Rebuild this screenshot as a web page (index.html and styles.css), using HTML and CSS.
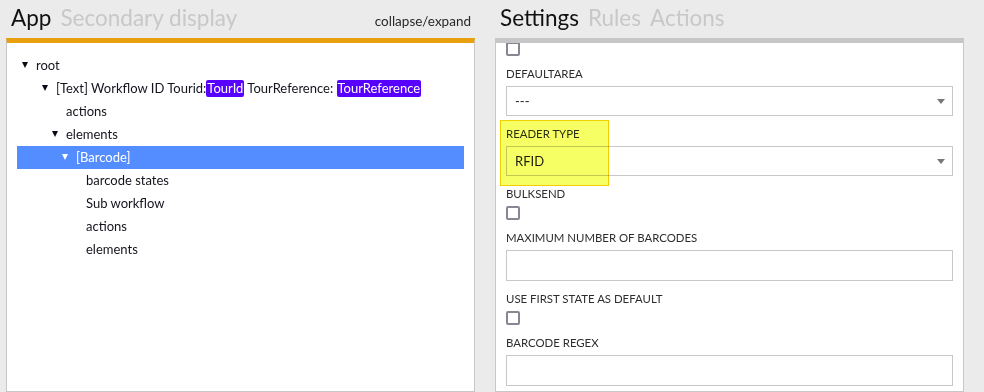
FILE: index.html
```html
<!DOCTYPE html>
<html lang="en">

<head>
    <meta charset="UTF-8">
    <title>Workflow editor</title>
    <link rel="stylesheet" href="styles.css">
</head>

<body>
    <div class="app">

        <!-- tree of the app -->
        <section class="pane">
            <header class="paneHead">
                <span class="tab active">App</span>
                <span class="tab">Secondary display</span>
                <span class="headLink">collapse/expand</span>
            </header>
            <div class="paneBody treeBody">
                <div class="row lv0"><span class="toggle open"></span>root</div>
                <div class="row lv1"><span class="toggle open"></span>[Text] Workflow ID Tourid:<span class="var">TourId</span> TourReference: <span class="var">TourReference</span></div>
                <div class="row lv2"><span class="toggle"></span>actions</div>
                <div class="row lv2"><span class="toggle open"></span>elements</div>
                <div class="row lv3 selected"><span class="toggle open"></span>[Barcode]</div>
                <div class="row lv4"><span class="toggle"></span>barcode states</div>
                <div class="row lv4"><span class="toggle"></span>Sub workflow</div>
                <div class="row lv4"><span class="toggle"></span>actions</div>
                <div class="row lv4"><span class="toggle"></span>elements</div>
            </div>
        </section>

        <!-- settings of the selected element -->
        <section class="pane">
            <header class="paneHead">
                <span class="tab active">Settings</span>
                <span class="tab">Rules</span>
                <span class="tab">Actions</span>
            </header>
            <div class="paneBody settingsBody">
                <div class="scroller">
                    <div class="field first">
                        <input type="checkbox" class="check">
                    </div>
                    <div class="field">
                        <div class="label">DefaultArea</div>
                        <div class="select"><span>---</span><span class="caret"></span></div>
                    </div>
                    <div class="field marked">
                        <div class="label">Reader type</div>
                        <div class="select"><span>RFID</span><span class="caret"></span></div>
                        <div class="highlight"></div>
                    </div>
                    <div class="field">
                        <div class="label">BulkSend</div>
                        <input type="checkbox" class="check">
                    </div>
                    <div class="field">
                        <div class="label">Maximum number of barcodes</div>
                        <input type="text" class="text">
                    </div>
                    <div class="field">
                        <div class="label">Use first state as default</div>
                        <input type="checkbox" class="check">
                    </div>
                    <div class="field">
                        <div class="label">Barcode regex</div>
                        <input type="text" class="text">
                    </div>
                </div>
            </div>
        </section>

    </div>
</body>

</html>
```

FILE: styles.css
```css
html,
body {
    margin: 0;
    padding: 0;
    height: 100%;
}

body {
    background-color: rgb(235, 235, 235);
    font-family: Lato, "Open Sans", sans-serif;
    color: rgb(20, 20, 30);
    overflow: hidden;
}

.app {
    display: flex;
    gap: 20px;
    height: 100vh;
    padding-left: 6px;
}

.pane {
    width: 469px;
    display: flex;
    flex-direction: column;
}

.paneHead {
    height: 38px;
    box-sizing: border-box;
    padding: 3px 4px 0 5px;
    display: flex;
    align-items: baseline;
}

.tab {
    font-size: 22.5px;
    line-height: 30px;
    color: rgb(200, 200, 200);
    margin-right: 9px;
}

.tab.active {
    color: rgb(17, 17, 17);
}

.headLink {
    margin-left: auto;
    font-size: 13.5px;
    color: rgb(40, 40, 40);
}

.paneBody {
    flex: 1;
    background-color: white;
    border: 1px solid rgb(200, 200, 200);
    border-top: 5px solid rgb(198, 198, 198);
    overflow: hidden;
}

.treeBody {
    border-top-color: rgb(232, 160, 14);
    padding: 11px 10px 0 10px;
}

/* tree rows */
.row {
    height: 23px;
    line-height: 23px;
    font-size: 13px;
    white-space: nowrap;
}

.lv0 { padding-left: 5px; }
.lv1 { padding-left: 25px; }
.lv2 { padding-left: 35px; }
.lv3 { padding-left: 45px; }
.lv4 { padding-left: 55px; }

.toggle {
    display: inline-block;
    width: 14px;
    height: 23px;
    vertical-align: top;
    position: relative;
}

.toggle.open::before {
    content: "";
    position: absolute;
    left: 0;
    top: 8px;
    border-left: 3px solid transparent;
    border-right: 3px solid transparent;
    border-top: 6px solid rgb(10, 10, 20);
}

.row.selected {
    background-color: rgb(83, 141, 255);
    color: white;
}

.row.selected .toggle.open::before {
    border-top-color: white;
}

.var {
    display: inline-block;
    background-color: rgb(88, 0, 255);
    color: white;
    border-radius: 2px;
    line-height: 17px;
    padding: 0 1px;
}

/* settings form */
.scroller {
    padding: 0 10px;
}

.field {
    position: relative;
    margin-bottom: 10px;
}

.field.first {
    margin-top: -1px;
}

.label {
    font-size: 11.4px;
    line-height: 16px;
    text-transform: uppercase;
    color: rgb(45, 45, 45);
    margin-bottom: 4px;
}

.check {
    appearance: none;
    display: block;
    width: 14px;
    height: 14px;
    margin: 0;
    box-sizing: border-box;
    border: 2px solid rgb(135, 135, 148);
    border-radius: 2px;
    background-color: white;
}

.select {
    height: 30px;
    box-sizing: border-box;
    border: 1px solid rgb(200, 200, 200);
    padding: 0 7px 0 8px;
    display: flex;
    align-items: center;
    font-size: 13px;
    color: rgb(30, 30, 40);
}

.caret {
    margin-left: auto;
    border-left: 4px solid transparent;
    border-right: 4px solid transparent;
    border-top: 5px solid rgb(120, 120, 120);
}

.text {
    display: block;
    width: 100%;
    height: 31px;
    box-sizing: border-box;
    border: 1px solid rgb(200, 200, 200);
    margin: 0;
    font-family: inherit;
}

/* yellow marker drawn over the reader type field */
.highlight {
    position: absolute;
    left: -6px;
    top: -6px;
    width: 109px;
    height: 66px;
    box-sizing: border-box;
    border: 1px solid rgb(240, 208, 0);
    background-color: rgb(246, 255, 100);
    mix-blend-mode: multiply;
}
```
